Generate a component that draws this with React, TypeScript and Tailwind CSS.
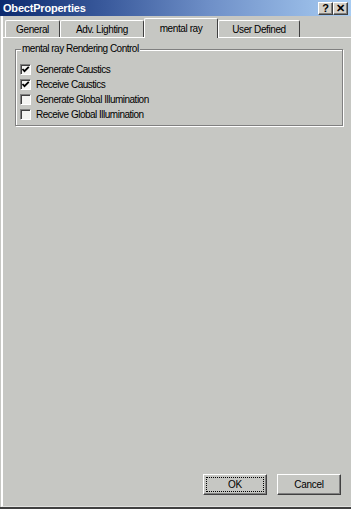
import React from 'react'

const font = { fontFamily: '"Liberation Sans", Arial, sans-serif' }

type Tab = { label: string; width: string; active?: boolean }

const tabs: Tab[] = [
    { label: 'General', width: 'w-[55px]' },
    { label: 'Adv. Lighting', width: 'w-[84px]' },
    { label: 'mental ray', width: 'w-[74px]', active: true },
    { label: 'User Defined', width: 'w-[82px]' },
]

const options = [
    { label: 'Generate Caustics', checked: true },
    { label: 'Receive Caustics', checked: true },
    { label: 'Generate Global Illumination', checked: false },
    { label: 'Receive Global Illumination', checked: false },
]

function TitleButton({ children }: { children: React.ReactNode }) {
    return (
        <div className="w-[15px] h-[13px] bg-[#d4d0c8] border-t border-l border-white border-r border-b border-r-[#404040] border-b-[#404040] flex items-center justify-center text-[11px] font-bold text-black leading-none shadow-[inset_-1px_-1px_0_#808080]">
            {children}
        </div>
    )
}

function Checkbox({ checked }: { checked: boolean }) {
    return (
        <div className="w-[11px] h-[11px] bg-[#f4f4f2] border-t border-l border-[#808080] border-r border-b border-r-white border-b-white shadow-[inset_1px_1px_0_#404040] flex items-center justify-center">
            {checked && (
                <svg width="9" height="9" viewBox="0 0 9 9">
                    <path d="M1.5 4 L3.5 6.2 L7.8 1.8" stroke="#000" strokeWidth="1.8" fill="none" />
                </svg>
            )}
        </div>
    )
}

function Button({ label, focused }: { label: string; focused?: boolean }) {
    return (
        <div className="w-[64px] h-[21px] bg-[#c6c7c3] border-t border-l border-white border-r border-b border-r-[#404040] border-b-[#404040] shadow-[inset_-1px_-1px_0_#808080] p-[2px]">
            <div
                className={`w-full h-full flex items-center justify-center text-[10px] tracking-[-0.3px] text-black ${focused ? 'border border-dotted border-black' : ''}`}
            >
                {label}
            </div>
        </div>
    )
}

export default function App() {
    return (
        <div className="w-[351px] h-[509px] bg-[#c6c7c3] flex flex-col overflow-hidden" style={font}>
            {/* Title bar */}
            <div className="h-[16px] flex items-center justify-between pl-[3px] pr-[3px] bg-[linear-gradient(90deg,#0c2a6e_0%,#3a5a9c_30%,#6f90c8_60%,#a8ccf2_100%)]">
                <span className="text-white text-[11px] font-bold tracking-[-0.2px]">ObectProperties</span>
                <div className="flex">
                    <TitleButton>?</TitleButton>
                    <TitleButton>✕</TitleButton>
                </div>
            </div>

            {/* Body */}
            <div className="flex-1 flex flex-col border-l-2 border-l-white ml-[1px] border-b border-b-[#e2e2e0]">
                {/* Tabs */}
                <div className="h-[21px] flex items-end pl-[2px]">
                    {tabs.map((t) =>
                        t.active ? (
                            <div
                                key={t.label}
                                className={`${t.width} h-[20px] -mb-[1px] relative z-10 bg-[#c6c7c3] border-t border-l border-white border-r border-r-[#404040] rounded-t-[2px] flex items-center justify-center text-[10px] tracking-[-0.4px] text-black`}
                            >
                                {t.label}
                            </div>
                        ) : (
                            <div
                                key={t.label}
                                className={`${t.width} h-[17px] bg-[#c6c7c3] border-t border-l border-white border-r border-r-[#404040] rounded-t-[2px] flex items-center justify-center text-[10px] tracking-[-0.4px] text-black`}
                            >
                                {t.label}
                            </div>
                        )
                    )}
                </div>

                {/* Tab page */}
                <div className="flex-1 flex flex-col border-t border-t-white pl-[12px] pr-[8px] pt-[11px]">
                    <div className="relative border border-[#808080] shadow-[1px_1px_0_#ffffff,inset_1px_1px_0_#ffffff] h-[77px] pt-[13px] pl-[4px]">
                        <span className="absolute -top-[7px] left-[5px] bg-[#c6c7c3] px-[1px] text-[10px] tracking-[-0.5px] leading-[12px] text-black">
                            mental ray Rendering Control
                        </span>
                        <div className="flex flex-col gap-[3px]">
                            {options.map((o) => (
                                <div key={o.label} className="flex items-center gap-[5px] h-[12px]">
                                    <Checkbox checked={o.checked} />
                                    <span className="text-[10px] tracking-[-0.5px] text-black">{o.label}</span>
                                </div>
                            ))}
                        </div>
                    </div>

                    <div className="flex-1" />

                    {/* Footer buttons */}
                    <div className="flex justify-end gap-[10px] pb-[11px] pr-[2px]">
                        <Button label="OK" focused />
                        <Button label="Cancel" />
                    </div>
                </div>
            </div>
            <div className="h-[2px] bg-[#404040]" />
        </div>
    )
}
